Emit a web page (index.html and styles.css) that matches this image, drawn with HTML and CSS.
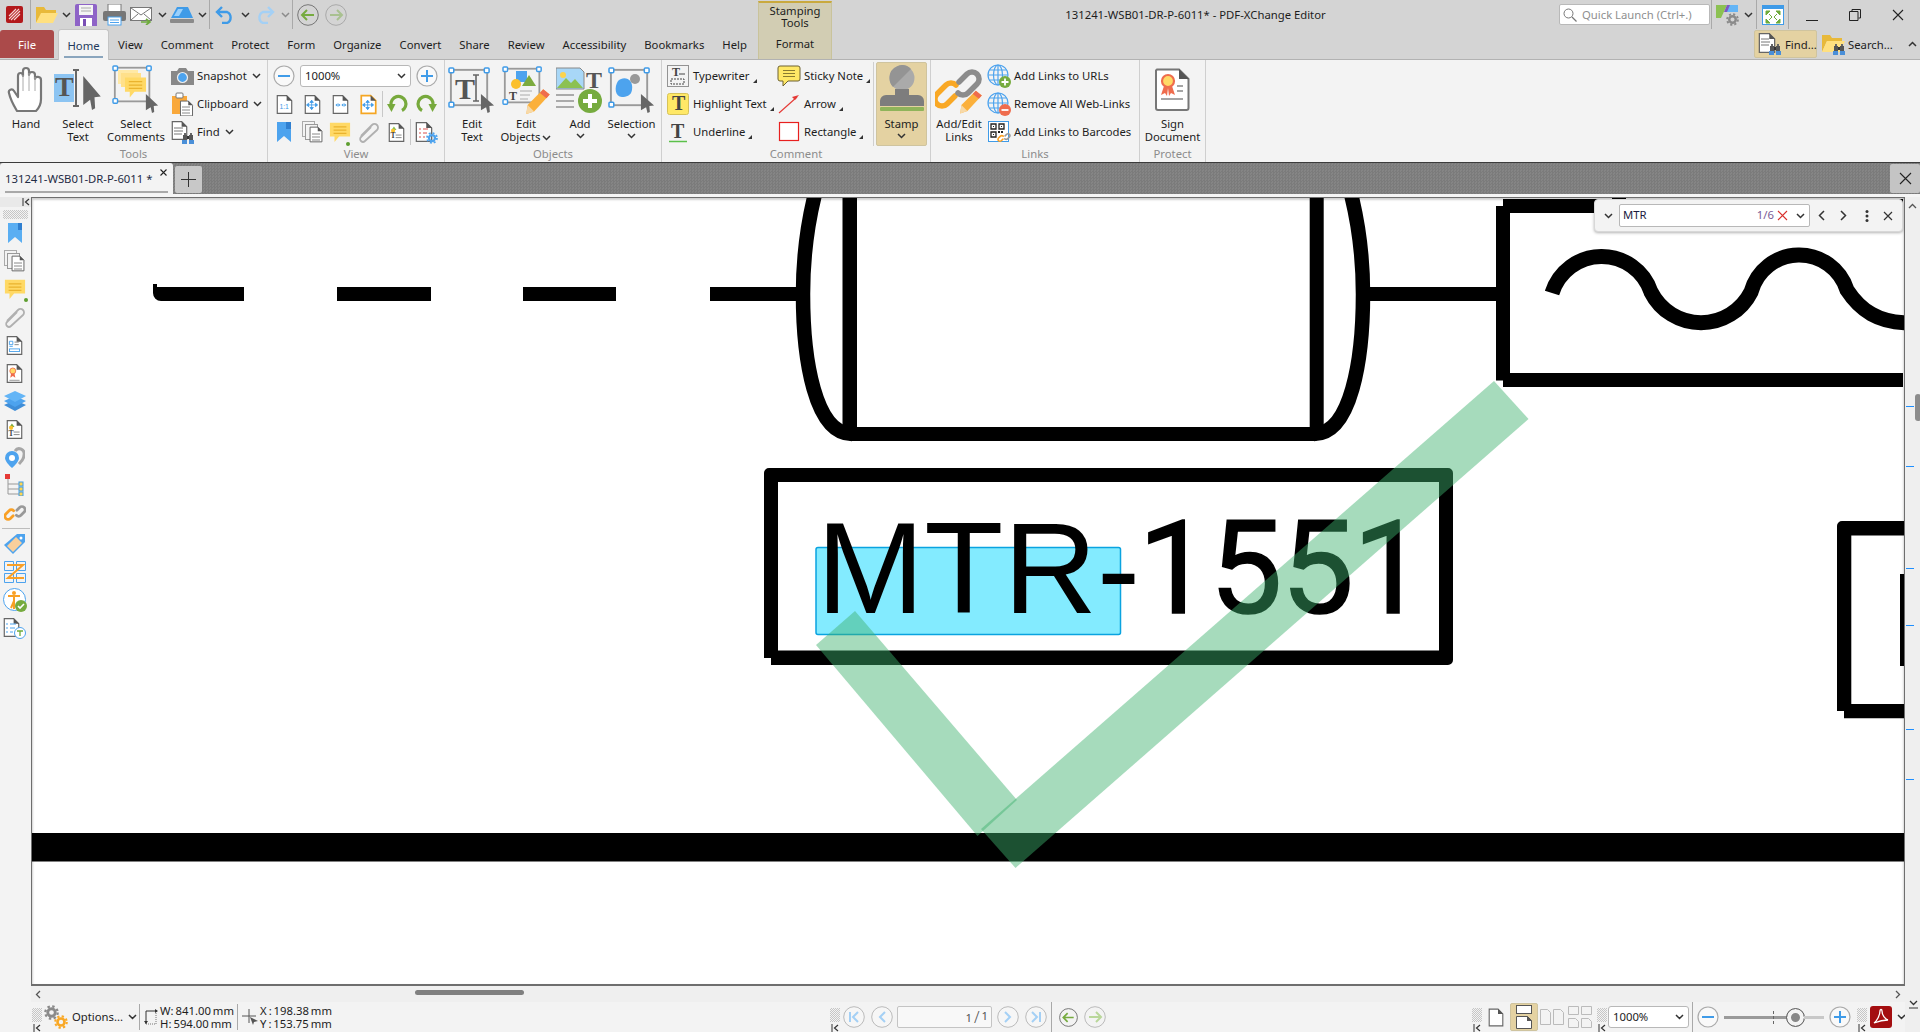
FILE: index.html
```html
<!DOCTYPE html>
<html lang="en">
<head>
<meta charset="utf-8">
<title>131241-WSB01-DR-P-6011* - PDF-XChange Editor</title>
<link rel="stylesheet" href="styles.css">
</head>
<body>
<svg class="defs" aria-hidden="true">
  <symbol id="chev" viewBox="0 0 9 6"><path d="M1 1l3.500 3.500L8 1" fill="none" stroke="#333" stroke-width="1.500"/></symbol>
  <symbol id="gear" viewBox="0 0 16 16"><circle cx="8" cy="8" r="4" fill="none" stroke="currentColor" stroke-width="3"/><circle cx="8" cy="8" r="6.600" fill="none" stroke="currentColor" stroke-width="2.400" stroke-dasharray="2.600 2.580"/></symbol>
  <symbol id="binoc" viewBox="0 0 12 12"><path d="M1 3h4v5H1zM7 3h4v5H7z" fill="#555"/><path d="M2 1h2v2H2zM8 1h2v2H8z" fill="#666"/><path d="M0 8h5v4H0zM7 8h5v4H7z" fill="#4a8fd8"/><path d="M5 4h2v3H5z" fill="#333"/></symbol>
  <symbol id="doc" viewBox="0 0 20 24"><path d="M1.500 1.500h11l6 6v15h-17z" fill="#fff" stroke="#666" stroke-width="1.400"/><path d="M12.500 1l6.500 6.500h-6.500z" fill="#555"/></symbol>
  <symbol id="bubble" viewBox="0 0 24 24"><path d="M1 2h22v15H11l-5 6v-6H1z" fill="#ffd966"/><path d="M5 6.500h14M5 10h14M5 13.500h14" stroke="#eab32e" stroke-width="1.300"/></symbol>
  <symbol id="pencil" viewBox="0 0 20 20"><path d="M14 1l5 4L7 18l-6 2 1-7z" fill="#fbb03b"/><path d="M14 1l5 4-2.500 2.800-5-4z" fill="#ef6c4d"/><path d="M2 13l5 5-6 2z" fill="#f7d9a8"/></symbol>
  <symbol id="globe" viewBox="0 0 24 24"><g fill="none" stroke="#4da3ee" stroke-width="1.200"><circle cx="11" cy="11" r="10"/><ellipse cx="11" cy="11" rx="4.500" ry="10"/><path d="M11 1v20M1 11h20M2.500 6h17M2.500 16h17"/></g></symbol>
  <symbol id="chain" viewBox="0 0 24 24"><path d="M10 15l-3 3a3.500 3.500 0 0 1-5-5l3.500-3.500a3.500 3.500 0 0 1 5 0" fill="none" stroke="#f9a025" stroke-width="3" stroke-linecap="round"/><path d="M14 9l3-3a3.500 3.500 0 0 1 5 5l-3.500 3.500a3.500 3.500 0 0 1-5 0" fill="none" stroke="#999" stroke-width="3" stroke-linecap="round"/></symbol>
  <symbol id="handles" viewBox="0 0 46 44"><rect x="3" y="3" width="38" height="37" fill="none" stroke="#9a9a9a" stroke-width="2"/><g fill="#fff" stroke="#3f9be8" stroke-width="1.600"><rect x="1" y="1" width="5" height="5" rx="1"/><rect x="38" y="1" width="5" height="5" rx="1"/><rect x="1" y="37" width="5" height="5" rx="1"/></g></symbol>
  <symbol id="cursor" viewBox="0 0 16 20" preserveAspectRatio="none"><path d="M1 0l14 12-5 .5.500 6.500L8 20l-1.500-6L1 17z" fill="#666"/></symbol>
  <symbol id="circminus" viewBox="0 0 22 22"><circle cx="11" cy="11" r="10" fill="#f9f9f9" stroke="#aaa" stroke-width="1.200"/><path d="M5 11h12" stroke="#3f9be8" stroke-width="2"/></symbol>
  <symbol id="circplus" viewBox="0 0 22 22"><circle cx="11" cy="11" r="10" fill="#f9f9f9" stroke="#aaa" stroke-width="1.200"/><path d="M5 11h12M11 5v12" stroke="#3f9be8" stroke-width="2"/></symbol>
  <symbol id="collapse" viewBox="0 0 8 8"><path d="M1 0v8" stroke="#333"/><path d="M7 1L3.500 4 7 7" fill="none" stroke="#333" stroke-width="1.200"/></symbol>
</svg>

<div class="app">
  <header class="head">
    <div class="qat">
      <div class="q q28"><svg width="17" height="17" viewBox="0 0 17 17"><rect width="17" height="17" rx="2" fill="#b3191c"/><path d="M3 13L13 3M5 14L14 5M8 14l6-6M3 10l7-7" stroke="#f4d5d5" stroke-width="1.100"/></svg></div>
      <i class="vsep m-l2"></i>
      <div class="q q31"><svg width="24" height="19" viewBox="0 0 24 19"><path d="M1 18V2h8l2 3h10v3H7L1 18z" fill="#e8b93a"/><path d="M1 18l5-10h17l-5 10z" fill="#ffe080"/></svg></div>
      <div class="q q8"><svg class="chev"><use href="#chev"/></svg></div>
      <div class="q q32"><svg width="22" height="22" viewBox="0 0 22 22"><path d="M0 2a2 2 0 0 1 2-2h18a2 2 0 0 1 2 2v20H0z" fill="#8e63c7"/><rect x="4" y="1" width="14" height="10" fill="#f4f4f4"/><path d="M6 4h10M6 7h10" stroke="#aaa"/><rect x="5" y="14" width="12" height="8" fill="#fff"/><rect x="8" y="15" width="3" height="7" fill="#7a4fb5"/></svg></div>
      <div class="q q24"><svg width="23" height="22" viewBox="0 0 23 22"><rect x="5" y="0" width="13" height="8" fill="#fff" stroke="#777"/><rect x="0" y="7" width="23" height="10" rx="2" fill="#777"/><rect x="5" y="13" width="13" height="8" fill="#fff" stroke="#4da3ee"/><path d="M7 16h9M7 18.500h9" stroke="#4da3ee"/></svg></div>
      <div class="q q31"><svg width="24" height="20" viewBox="0 0 24 20"><rect x=".5" y="2.500" width="21" height="13" fill="#fff" stroke="#777"/><path d="M1 3l10 7 10-7M1 15l7-6M21 15l-7-6" fill="none" stroke="#777"/><path d="M11 17h8m-3-3l4 3-4 3" fill="none" stroke="#6eab3c" stroke-width="1.600"/></svg></div>
      <div class="q q10"><svg class="chev"><use href="#chev"/></svg></div>
      <div class="q q30"><svg width="24" height="16" viewBox="0 0 24 16"><path d="M7 0h11l5 11H1z" fill="#3f9be8"/><path d="M8 2h5l-4 7H4z" fill="#9ad0fb"/><rect x="0" y="12" width="24" height="4" rx="1" fill="#8a8a8a"/></svg></div>
      <div class="q q10"><svg class="chev"><use href="#chev"/></svg></div>
      <i class="vsep m-x2"></i>
      <div class="q q30"><svg width="20" height="18" viewBox="0 0 20 18"><path d="M7 1L2 6l5 5" fill="none" stroke="#3f9be8" stroke-width="2.400"/><path d="M3 6h9a6 6 0 0 1 0 11H7" fill="none" stroke="#3f9be8" stroke-width="2.400"/></svg></div>
      <div class="q q10"><svg class="chev"><use href="#chev"/></svg></div>
      <div class="q q30"><svg width="20" height="18" viewBox="0 0 20 18"><path d="M13 1l5 5-5 5" fill="none" stroke="#a4d0f5" stroke-width="2.400"/><path d="M17 6H8a6 6 0 0 0 0 11h5" fill="none" stroke="#a4d0f5" stroke-width="2.400"/></svg></div>
      <div class="q q10"><svg class="chev dim"><use href="#chev"/></svg></div>
      <i class="vsep m-x2"></i>
      <div class="q q29"><svg width="22" height="22" viewBox="0 0 22 22"><circle cx="11" cy="11" r="10.300" fill="none" stroke="#777"/><path d="M5 11h12M10 6l-5 5 5 5" fill="none" stroke="#76ab3f" stroke-width="2"/></svg></div>
      <div class="q q28"><svg class="dim" width="22" height="22" viewBox="0 0 22 22"><circle cx="11" cy="11" r="10.300" fill="none" stroke="#777"/><path d="M5 11h12M12 6l5 5-5 5" fill="none" stroke="#76ab3f" stroke-width="2"/></svg></div>
    </div>

    <nav class="tabs">
      <span class="tab-file">File</span>
      <span class="tab-home">Home</span>
      <span class="tab">View</span><span class="tab">Comment</span><span class="tab">Protect</span><span class="tab">Form</span><span class="tab">Organize</span><span class="tab">Convert</span><span class="tab">Share</span><span class="tab">Review</span><span class="tab">Accessibility</span><span class="tab">Bookmarks</span><span class="tab">Help</span>
    </nav>

    <div class="context"><span class="ctx-title">Stamping<br>Tools</span><span class="ctx-tab">Format</span></div>

    <div class="title">131241-WSB01-DR-P-6011* - PDF-XChange Editor</div>

    <div class="winbar">
      <div class="quick"><svg width="14" height="14" viewBox="0 0 14 14"><circle cx="5.500" cy="5.500" r="4.500" fill="none" stroke="#777"/><path d="M9 9l4.500 4.500" stroke="#777" stroke-width="1.300"/></svg><span>Quick Launch (Ctrl+.)</span></div>
      <i class="vsep m-x1"></i>
      <svg class="m-l4" width="24" height="24" viewBox="0 0 24 24"><path d="M0 2h11L5 15H0z" fill="#8cc152"/><path d="M12 2h10v7h-13z" fill="#64b5f6"/><path d="M11 2h3l-3 7H8z" fill="#7e57c2"/><path d="M0 15h6l-1 0z" fill="#f2994a"/><use href="#gear" x="10" y="10" width="13" height="13" class="c-gray"/></svg>
      <svg class="chev m-l4"><use href="#chev"/></svg>
      <i class="vsep m-l3"></i>
      <svg class="m-l5" width="22" height="20" viewBox="0 0 22 20"><rect x=".5" y=".5" width="21" height="19" fill="#fff" stroke="#3f9be8"/><rect width="22" height="4" fill="#3f9be8"/><path d="M4 6l4 0-4 4zM18 6h-4l4 4zM4 18h4l-4-4zM18 18h-4l4-4zM7 9l3 3M15 9l-3 3M7 15l3-3M15 15l-3-3" fill="#6eab3c" stroke="#6eab3c"/></svg>
      <i class="vsep m-l4"></i>
      <div class="wbtn wb-min"><svg width="12" height="12" viewBox="0 0 12 12"><path d="M0 11.500h12" stroke="#222"/></svg></div>
      <div class="wbtn"><svg width="12" height="12" viewBox="0 0 12 12"><path d="M3 2.500V.5h8.500V9H9.500M.5 2.500H9V11.500H.5z" fill="none" stroke="#222"/></svg></div>
      <div class="wbtn"><svg width="12" height="12" viewBox="0 0 12 12"><path d="M1 1l10 10M11 1L1 11" stroke="#222" stroke-width="1.100"/></svg></div>
    </div>

    <div class="quickbtns">
      <div class="qbtn active"><svg width="24" height="24" viewBox="0 0 24 24"><use href="#doc" width="18" height="22"/><path d="M3 7h8M3 10h9M3 13h8" stroke="#777"/><use href="#binoc" x="11" y="11" width="12" height="12"/></svg><span>Find...</span></div>
      <div class="qbtn"><svg width="24" height="24" viewBox="0 0 24 24"><path d="M1 20V3h8l2 3h10v3H6z" fill="#e8b93a"/><path d="M1 20l5-11h18l-5 11z" fill="#ffe080"/><use href="#binoc" x="12" y="11" width="12" height="12"/></svg><span>Search...</span></div>
      <svg class="caret" width="9" height="6" viewBox="0 0 9 6"><path d="M1 5l3.500-3.500L8 5" fill="none" stroke="#333" stroke-width="1.500"/></svg>
    </div>
  </header>

  <section class="ribbon">
    <div class="group g-tools">
      <div class="gbody">
        <div class="big w52"><div class="bic"><svg width="38" height="50" viewBox="0 0 38 50"><path d="M10 46C7 41 3 33 2 28c-1-3 3-5 5-2l4 6V11c0-4 5-4 5 0V6c0-4 6-4 6 0v4c0-4 6-4 6 0v4c0-3 6-3 6 1v19c0 5-2 9-5 12z" fill="#fff" stroke="#777" stroke-width="2.200" stroke-linejoin="round"/><path d="M16 10v16M22 8v18M28 12v14" stroke="#aaa"/></svg></div><span class="lbl">Hand</span></div>
        <div class="big w52"><div class="bic"><svg width="48" height="42" viewBox="0 0 48 42"><rect y="5" width="20" height="28" fill="#8cc4f2"/><text x="1" y="27" class="ictxt">T</text><path d="M19 1h6M22 1v36M19 37h6" stroke="#666" stroke-width="2" fill="none"/><use href="#cursor" x="28" y="7" width="20" height="34"/></svg></div><span class="lbl">Select<br>Text</span></div>
        <div class="big w64"><div class="bic"><svg width="48" height="50" viewBox="0 0 48 50"><use href="#handles" width="42" height="40"/><rect x="6" y="5" width="20" height="14" fill="#ffe9a6"/><rect x="9" y="8" width="20" height="14" fill="#ffe08a"/><use href="#bubble" x="12" y="10" width="23" height="24"/><use href="#cursor" x="33" y="29" width="14" height="19"/></svg></div><span class="lbl">Select<br>Comments</span></div>
        <div class="smallcol">
          <div class="srow"><svg class="sic" width="23" height="18" viewBox="0 0 23 18"><path d="M0 4h6l2-3h7l2 3h6v14H0z" fill="#888"/><circle cx="11.500" cy="10.500" r="5" fill="#4da3ee" stroke="#eee" stroke-width="1.200"/></svg><span>Snapshot</span><svg class="chev m-l5"><use href="#chev"/></svg></div>
          <div class="srow"><svg class="sic" width="23" height="24" viewBox="0 0 23 24"><path d="M1 4h15v18H1z" fill="#f9a83a"/><rect x="5" y="1" width="7" height="5" rx="1" fill="#fff" stroke="#777"/><use href="#doc" x="8" y="8" width="15" height="17"/><path d="M11 15h8M11 18h8M11 21h8" stroke="#888"/></svg><span>Clipboard</span><svg class="chev m-l5"><use href="#chev"/></svg></div>
          <div class="srow"><svg class="sic" width="23" height="24" viewBox="0 0 23 24"><use href="#doc" width="17" height="21"/><path d="M3 8h9M3 11h9M3 14h8" stroke="#777"/><use href="#binoc" x="11" y="12" width="12" height="12"/></svg><span>Find</span><svg class="chev m-l5"><use href="#chev"/></svg></div>
        </div>
      </div>
      <div class="glabel">Tools</div>
    </div>

    <div class="group g-view">
      <div class="viewgrid">
        <div class="vrow vrow1">
          <svg width="22" height="22"><use href="#circminus"/></svg>
          <div class="combo c-zoom"><span>1000%</span><svg class="chev"><use href="#chev"/></svg></div>
          <svg width="22" height="22"><use href="#circplus"/></svg>
        </div>
        <div class="vrow">
          <div class="cell"><svg width="17" height="21" viewBox="0 0 20 24"><use href="#doc"/><text x="4" y="17" class="mini">1:1</text></svg></div>
          <div class="cell"><svg width="17" height="21" viewBox="0 0 20 24"><use href="#doc"/><path d="M9 7v11M4 12.500h11M9 7L7 9.500h4zM9 18l-2-2.500h4zM3 12.500l2.500-2v4zM16 12.500l-2.500-2v4z" fill="#3f9be8" stroke="#3f9be8"/></svg></div>
          <div class="cell"><svg width="17" height="21" viewBox="0 0 20 24"><use href="#doc"/><path d="M4 12.500l2.500-2v4zM10 12.500L7.500 10.500v4zM11 12.500l2.500-2v4zM17 12.500l-2.500-2v4z" fill="#3f9be8"/></svg></div>
          <div class="cell"><svg width="17" height="21" viewBox="0 0 20 24"><path d="M1.500 1.500h11l6 6v15h-17z" fill="#fff" stroke="#f5a623" stroke-width="2"/><path d="M12.500 1l6.500 6.500h-6.500z" fill="#555"/><path d="M9 7v11M4 12.500h11M9 7L7 9.500h4zM9 18l-2-2.500h4zM3 12.500l2.500-2v4zM16 12.500l-2.500-2v4z" fill="#3f9be8" stroke="#3f9be8"/></svg></div>
          <i class="vsep rsep"></i>
          <div class="cell"><svg width="22" height="20" viewBox="0 0 22 20"><path d="M4 11A7.500 7.500 0 1 1 15 16.500" fill="none" stroke="#77a93c" stroke-width="3.200"/><path d="M0 10h8.500l-4 8z" fill="#77a93c"/></svg></div>
          <div class="cell"><svg width="22" height="20" viewBox="0 0 22 20"><path d="M18 11A7.500 7.500 0 1 0 7 16.500" fill="none" stroke="#77a93c" stroke-width="3.200"/><path d="M22 10h-8.500l4 8z" fill="#77a93c"/></svg></div>
        </div>
        <div class="vrow">
          <div class="cell"><svg width="14" height="20" viewBox="0 0 14 20"><path d="M0 0h14v20l-7-6-7 6z" fill="#4da3ee"/><rect x="9" width="5" height="7" fill="#2f7fd0"/></svg></div>
          <div class="cell"><svg width="21" height="22" viewBox="0 0 21 22"><rect x=".5" y=".5" width="12" height="15" fill="#f3f3f3" stroke="#aaa"/><rect x="3.500" y="3.500" width="12" height="15" fill="#f3f3f3" stroke="#999"/><use href="#doc" x="7" y="5" width="14" height="17"/><path d="M10 13h8M10 16h8M10 19h8" stroke="#888"/></svg></div>
          <div class="cell cell-dot"><svg width="22" height="22"><use href="#bubble"/></svg><i class="gdot"></i></div>
          <div class="cell"><svg width="23" height="22" viewBox="0 0 23 22"><path d="M4 15L15 4a3.500 3.500 0 0 1 5 5L8 20a2.800 2.800 0 0 1-4-4l10-10" fill="none" stroke="#b0b0b0" stroke-width="1.800"/></svg></div>
          <div class="cell"><svg width="17" height="21" viewBox="0 0 20 24"><use href="#doc"/><path d="M4 9l3-4 3 4z" fill="#8cc152"/><circle cx="6" cy="10" r="2.500" fill="#fbc02d"/><text x="3" y="19" class="mini2">T</text><path d="M9 15h7M9 18h7" stroke="#777"/></svg></div>
          <i class="vsep rsep2"></i>
          <div class="cell"><svg width="23" height="23" viewBox="0 0 23 23"><use href="#doc" width="18" height="22"/><path d="M4 8h2M8 8h5M4 12h2M8 12h4M4 16h2M8 16h2" stroke="#d9534f"/><use href="#gear" x="11" y="11" width="12" height="12" class="c-blue"/></svg></div>
        </div>
      </div>
      <div class="glabel">View</div>
    </div>

    <div class="group g-objects">
      <div class="gbody">
        <div class="big w54"><div class="bic"><svg width="48" height="46" viewBox="0 0 48 46"><use href="#handles" width="44" height="42"/><text x="7" y="32" class="ictxt lg">T</text><path d="M25 8h6M28 8v26M25 34h6" stroke="#666" stroke-width="1.600" fill="none"/><use href="#cursor" x="32" y="27" width="15" height="19"/></svg></div><span class="lbl">Edit<br>Text</span></div>
        <div class="big w54"><div class="bic"><svg width="48" height="48" viewBox="0 0 48 48"><use href="#handles" width="42" height="40"/><rect x="14" y="5" width="11" height="11" fill="#4da3ee"/><path d="M20 20l7-11 7 11z" fill="#7cab3e"/><circle cx="14" cy="18" r="5" fill="#fbc02d"/><text x="7" y="34" class="mini3">T</text><path d="M18 25h12M18 29h10M18 33h8" stroke="#aaa"/><use href="#pencil" x="23" y="22" width="26" height="26"/></svg></div><span class="lbl">Edit<br>Objects<svg class="chev inl"><use href="#chev"/></svg></span></div>
        <div class="big w54"><div class="bic"><svg width="48" height="48" viewBox="0 0 48 48"><path d="M0 2h24l4 4v17H0z" fill="#a8d7f7" stroke="#888"/><circle cx="7" cy="9" r="3" fill="#fcd34d"/><path d="M1 22l9-10 5 5 4-4 8 9z" fill="#8cc152"/><text x="30" y="22" class="ictxt add">T</text><path d="M0 29h18M0 35h18M0 41h18" stroke="#aaa" stroke-width="2"/><circle cx="34" cy="35" r="12" fill="#76ab3f"/><path d="M27 35h14M34 28v14" stroke="#fff" stroke-width="4"/></svg></div><span class="lbl">Add<br><svg class="chev"><use href="#chev"/></svg></span></div>
        <div class="big w49"><div class="bic"><svg width="48" height="46" viewBox="0 0 48 46"><use href="#handles" width="44" height="42"/><path d="M10 14c6-6 16-2 14 9-1 6-6 7-10 7-7 0-8-10-4-16z" fill="#4da3ee"/><circle cx="27" cy="12" r="5" fill="#999"/><use href="#cursor" x="32" y="27" width="15" height="19"/></svg></div><span class="lbl">Selection<br><svg class="chev"><use href="#chev"/></svg></span></div>
      </div>
      <div class="glabel">Objects</div>
    </div>

    <div class="group g-comment">
      <div class="gbody">
        <div class="smallcol col-a">
          <div class="srow"><svg class="sic22" width="22" height="22" viewBox="0 0 22 22"><rect x=".5" y=".5" width="21" height="21" fill="none" stroke="#333" stroke-dasharray="1 1"/><text x="5" y="11" class="mini3">T</text><path d="M4 14h13v5H4z" fill="none" stroke="#444" stroke-dasharray="2 1"/><path d="M12 9h6" stroke="#444"/></svg><span>Typewriter</span><i class="corner"></i></div>
          <div class="srow"><svg class="sic22" width="22" height="22" viewBox="0 0 22 22"><rect x=".5" y=".5" width="21" height="21" rx="2" fill="#ffe866" stroke="#d6c25a"/><text x="5" y="17" class="ictxt sm">T</text></svg><span>Highlight Text</span><i class="corner"></i></div>
          <div class="srow"><svg class="sic22" width="22" height="22" viewBox="0 0 22 22"><text x="4" y="17" class="ictxt sm">T</text><path d="M2 20.500h18" stroke="#5bc04a" stroke-width="1.500"/></svg><span>Underline</span><i class="corner"></i></div>
        </div>
        <div class="smallcol col-b">
          <div class="srow"><svg class="sic" width="24" height="22" viewBox="0 0 24 22"><path d="M3 1h18a2 2 0 0 1 2 2v11a2 2 0 0 1-2 2H11l-5 5v-5H3a2 2 0 0 1-2-2V3a2 2 0 0 1 2-2z" fill="#ffe866" stroke="#6c6130"/><path d="M6 5.500h12M6 8.500h12M6 11.500h12" stroke="#8a7c30"/></svg><span>Sticky Note</span><i class="corner"></i></div>
          <div class="srow"><svg class="sic" width="24" height="22" viewBox="0 0 24 22"><path d="M2 20L20 4" stroke="#e53935" stroke-width="1.200"/><path d="M22 2l-7 2 3 3z" fill="#e53935"/></svg><span>Arrow</span><i class="corner"></i></div>
          <div class="srow"><svg class="sic" width="24" height="22" viewBox="0 0 24 22"><rect x="2.500" y="1.500" width="19" height="18" fill="#fff" stroke="#e8201f" stroke-width="1.200"/></svg><span>Rectangle</span><i class="corner"></i></div>
        </div>
        <i class="vsep stampsep"></i>
        <div class="stamp">
          <svg width="46" height="48" viewBox="0 0 46 48"><circle cx="23" cy="13" r="12.500" fill="#aaa"/><path d="M10.500 13A12.500 12.500 0 0 1 32 4L14 22a12.500 12.500 0 0 1-3.500-9z" fill="#949494"/><path d="M16 24h14v6h9a6 6 0 0 1 6 6v5H1v-5a6 6 0 0 1 6-6h9z" fill="#7d7d7d"/><rect x="1" y="42" width="44" height="4" rx="1" fill="#8fb45a"/></svg>
          <span class="lbl">Stamp<br><svg class="chev"><use href="#chev"/></svg></span>
        </div>
      </div>
      <div class="glabel">Comment</div>
    </div>

    <div class="group g-links">
      <div class="gbody">
        <div class="big w56"><div class="bic"><svg width="48" height="50" viewBox="0 0 48 50"><path d="M20 31l-8 8a7 7 0 0 1-10-10l9-9a7 7 0 0 1 10 0" fill="none" stroke="#f9a825" stroke-width="5.500" stroke-linecap="round"/><path d="M24 17l8-8a7 7 0 0 1 10 10l-9 9a7 7 0 0 1-10 0" fill="none" stroke="#8c8c8c" stroke-width="5.500" stroke-linecap="round"/><use href="#pencil" x="24" y="24" width="24" height="25"/></svg></div><span class="lbl">Add/Edit<br>Links</span></div>
        <div class="smallcol col-l">
          <div class="srow"><svg class="sic" width="24" height="24" viewBox="0 0 24 24"><use href="#globe"/><circle cx="18" cy="18" r="6" fill="#76ab3f"/><path d="M14.500 18h7M18 14.500v7" stroke="#fff" stroke-width="1.800"/></svg><span>Add Links to URLs</span></div>
          <div class="srow"><svg class="sic" width="24" height="24" viewBox="0 0 24 24"><use href="#globe"/><circle cx="18" cy="18" r="6" fill="#ef6c4d"/><path d="M14.500 18h7" stroke="#fff" stroke-width="1.800"/></svg><span>Remove All Web-Links</span></div>
          <div class="srow"><svg class="sic" width="24" height="24" viewBox="0 0 24 24"><rect x="1.500" y="1.500" width="20" height="20" fill="#fff" stroke="#3f9be8"/><path d="M4 4h5v5H4zM12 4h5v5h-5zM4 12h5v5H4z" fill="none" stroke="#222" stroke-width="1.300"/><path d="M6 6h1v1H6zM14 6h1v1h-1zM6 14h1v1H6zM11 11h2v2h-2zM14 11h2v2h-2z" fill="#222"/><use href="#chain" x="10" y="11" width="14" height="13"/></svg><span>Add Links to Barcodes</span></div>
        </div>
      </div>
      <div class="glabel">Links</div>
    </div>

    <div class="group g-protect">
      <div class="gbody">
        <div class="big w65"><div class="bic"><svg width="35" height="44" viewBox="0 0 35 44"><path d="M2 1.500h22l9.500 9.500v29a2 2 0 0 1-2 2H3a2 2 0 0 1-2-2V2.500z" fill="#fff" stroke="#777" stroke-width="2"/><path d="M24 1l10 10H24z" fill="#555"/><circle cx="13" cy="13" r="6" fill="#ffd966" stroke="#ef6c4d" stroke-width="2.200"/><path d="M9 18l-3 9 4-2 2 3 1-8 1 8 2-3 4 2-3-9z" fill="#ef6c4d"/><path d="M22 18h6M22 23h6M6 31h22" stroke="#888" stroke-width="1.500"/></svg></div><span class="lbl">Sign<br>Document</span></div>
      </div>
      <div class="glabel">Protect</div>
    </div>
    <div class="ribbon-rest"></div>
  </section>

  <div class="docstrip">
    <div class="doctab"><span>131241-WSB01-DR-P-6011 *</span><svg class="doctab-x" width="7" height="7" viewBox="0 0 7 7"><path d="M.5.500l6 6M6.500.500l-6 6" stroke="#222" stroke-width="1.100"/></svg></div>
    <div class="addtab"><svg width="15" height="15" viewBox="0 0 15 15"><path d="M7.500 0v15M0 7.500h15" stroke="#333"/></svg></div>
    <div class="strip-rest"></div>
    <div class="closeall"><svg width="13" height="13" viewBox="0 0 13 13"><path d="M1 1l11 11M12 1L1 12" stroke="#222" stroke-width="1.100"/></svg></div>
  </div>
  <div class="stripgap"></div>

  <div class="work">
    <aside class="side">
      <div class="side-top"><svg class="col8" width="8" height="8"><use href="#collapse"/></svg></div>
      <div class="grip-h"></div>
      <div class="sideicons">
        <div class="si"><svg width="14" height="20" viewBox="0 0 14 20"><path d="M0 0h14v20l-7-6-7 6z" fill="#5aaef2"/><rect x="10" width="4" height="7" fill="#2f7fd0"/></svg></div>
        <div class="si"><svg width="21" height="22" viewBox="0 0 21 22"><rect x=".5" y=".5" width="12" height="15" fill="#f3f3f3" stroke="#aaa"/><rect x="3.500" y="3.500" width="12" height="15" fill="#f3f3f3" stroke="#999"/><use href="#doc" x="7" y="5" width="14" height="17"/><path d="M10 13h8M10 16h8M10 19h8" stroke="#888"/></svg></div>
        <div class="si cell-dot"><svg width="22" height="22"><use href="#bubble"/></svg><i class="gdot gdot-s"></i></div>
        <div class="si"><svg width="23" height="22" viewBox="0 0 23 22"><path d="M4 15L15 4a3.500 3.500 0 0 1 5 5L8 20a2.800 2.800 0 0 1-4-4l10-10" fill="none" stroke="#b0b0b0" stroke-width="1.800"/></svg></div>
        <div class="si"><svg width="17" height="21" viewBox="0 0 20 24"><use href="#doc"/><path d="M4 7h4v4H4zM4 13h4" fill="none" stroke="#3f9be8"/><path d="M10 8h5M10 11h5" stroke="#777"/><rect x="4" y="16" width="12" height="3" fill="none" stroke="#3f9be8"/></svg></div>
        <div class="si"><svg width="17" height="21" viewBox="0 0 20 24"><use href="#doc"/><circle cx="8" cy="9" r="3.500" fill="#ffd966" stroke="#ef6c4d"/><path d="M6 12l-1 5 3-2 3 2-1-5z" fill="#ef6c4d"/><path d="M4 20h12" stroke="#888"/></svg></div>
        <div class="si"><svg width="22" height="20" viewBox="0 0 22 20"><path d="M11 9l11 5-11 6L0 14z" fill="#3f8ed8"/><path d="M11 5l11 5-11 6L0 10z" fill="#4da3ee"/><path d="M11 0l11 5-11 6L0 5z" fill="#64b5f6"/></svg></div>
        <div class="si"><svg width="17" height="21" viewBox="0 0 20 24"><use href="#doc"/><path d="M4 9l3-4 3 4z" fill="#7cab3e"/><circle cx="6" cy="10" r="2.500" fill="#fbc02d"/><text x="3" y="20" class="mini2">T</text><path d="M9 15h7M9 18h7" stroke="#777"/></svg></div>
        <div class="si"><svg width="20" height="21" viewBox="0 0 20 21"><path d="M10 4a5 5 0 0 1 9 4c0 3-3 7-5 9" fill="none" stroke="#a6a6a6" stroke-width="3"/><path d="M7 4a7 7 0 0 1 7 7c0 4-7 10-7 10S0 15 0 11a7 7 0 0 1 7-7z" fill="#4da3ee"/><circle cx="7" cy="11" r="3" fill="#fff"/></svg></div>
        <div class="si"><svg width="19" height="22" viewBox="0 0 19 22"><rect width="5" height="5" fill="#e53935"/><path d="M3 5v15h12M3 10h12M3 15h12" fill="none" stroke="#999"/><g fill="#ffd54f" stroke="#3f9be8"><rect x="14" y="8" width="4" height="4"/><rect x="14" y="13" width="4" height="4"/><rect x="14" y="18" width="4" height="4"/></g></svg></div>
        <div class="si"><svg width="22" height="22"><use href="#chain"/></svg></div>
      </div>
      <i class="side-sep"></i>
      <div class="sideicons">
        <div class="si"><svg width="21" height="20" viewBox="0 0 21 20"><path d="M13 0h8v8L9 20 0 11z" fill="#4da3ee"/><path d="M12 3l6 6-9 9-6-6z" fill="#f9cf9c"/><circle cx="17" cy="4" r="1.500" fill="#fff"/></svg></div>
        <div class="si"><svg width="22" height="22" viewBox="0 0 22 22"><path d="M.5.500h9v9h-9zM12.500.500h9v9h-9zM.5 12.500h9v9h-9zM12.500 12.500h9v9h-9z" fill="none" stroke="#4da3ee"/><path d="M3 4h16L4 17h16" fill="none" stroke="#f9a025" stroke-width="2"/></svg></div>
        <div class="si"><svg width="24" height="24" viewBox="0 0 24 24"><circle cx="11.500" cy="11.500" r="11" fill="#fff" stroke="#4da3ee"/><circle cx="11" cy="5" r="2" fill="#f9a025"/><path d="M5 8h12M11 8v13M11 13l-3 7" fill="none" stroke="#f9a025" stroke-width="2"/><circle cx="18" cy="18" r="6" fill="#76ab3f"/><path d="M15 18l2 2 4-4" fill="none" stroke="#fff" stroke-width="1.600"/></svg></div>
        <div class="si"><svg width="23" height="22" viewBox="0 0 23 22"><use href="#doc" width="17" height="21"/><path d="M3 7h2M7 7h6M3 11h2M7 11h5M3 15h2M7 15h3" stroke="#4da3ee"/><circle cx="17" cy="16" r="5.500" fill="#fff" stroke="#4da3ee"/><path d="M14 14h6M17 14v5" stroke="#6eab3c" stroke-width="1.300"/></svg></div>
      </div>
    </aside>

    <div class="center">
      <main class="viewport">
        <svg class="drawing" viewBox="32 198 1872 786" preserveAspectRatio="none">
          <rect x="816" y="547.500" width="304.500" height="87" rx="2" class="hl"/>
          <g class="ink">
            <path d="M153 284h4v3h87v14h-83a8 8 0 0 1-8-8zM337 287h94v14h-94zM523 287h93v14h-93zM710 287h90v14h-90z"/>
            <path d="M842.500 198h14.500v229h452.700V198h14v229h-7.200v14H849.700v-14h-7.200z"/>
            <path d="M1370 287h126v14h-126z"/>
            <path d="M1503 199h400v14h-393v160h393v14h-400v-6.500h-7V206h7zM1612 197h14v3h-14z"/>
            <path d="M764 473a5 5 0 0 1 5-5h679a5 5 0 0 1 5 5v187a5 5 0 0 1-5 5H771v-7h-7zM778 482v168.500h661V482z" fill-rule="evenodd"/>
            <path d="M1837 526a5 5 0 0 1 5-5h63v14.500h-53.700V704H1905v14.300h-61v-7.300h-7z"/>
            <path d="M1900 574h5v92h-5z"/>
            <path d="M32 833h1872v28.500H32z"/>
          </g>
          <g class="stroke14">
            <path d="M816 190Q803 240 803 294C803 360 815 434 852 434"/>
            <path d="M1350 190Q1363 240 1363 294C1363 360 1351 434 1314 434"/>
            <path class="wave" d="M1552 293A52 52 0 0 1 1651 292A56 56 0 0 0 1751 292A50 50 0 0 1 1847 290C1860 310 1878 323 1910 323"/>
          </g>
          <text x="816.500" y="612.500" class="tag">MTR-<tspan class="tag-digits" x="1138">1551</tspan></text>
          <polygon class="check" points="855,611 816,645 977.500,836 1017,800"/>
          <polygon class="check" points="1494,381 1528.500,419 1015.500,868 981,829"/>
        </svg>
        <div class="findbar">
          <svg class="chev"><use href="#chev"/></svg>
          <div class="findbox"><span class="ftext">MTR</span><span class="fcount">1/6</span><svg width="11" height="11" viewBox="0 0 11 11"><path d="M1 1l9 9M10 1l-9 9" stroke="#d9302c" stroke-width="1.100"/></svg><svg class="chev"><use href="#chev"/></svg></div>
          <svg class="fic-prev" width="7" height="11" viewBox="0 0 7 11"><path d="M6 1L1.500 5.500 6 10" fill="none" stroke="#333" stroke-width="1.500"/></svg>
          <svg class="fic-next" width="7" height="11" viewBox="0 0 7 11"><path d="M1 1l4.500 4.500L1 10" fill="none" stroke="#333" stroke-width="1.500"/></svg>
          <svg class="fic-more" width="4" height="12" viewBox="0 0 4 12"><circle cx="2" cy="1.500" r="1.500" fill="#333"/><circle cx="2" cy="6" r="1.500" fill="#333"/><circle cx="2" cy="10.500" r="1.500" fill="#333"/></svg>
          <svg class="fic-close" width="10" height="10" viewBox="0 0 10 10"><path d="M1 1l8 8M9 1L1 9" stroke="#333" stroke-width="1.200"/></svg>
        </div>
      </main>

      <div class="hscroll"><svg class="arrow" width="6" height="9" viewBox="0 0 6 9"><path d="M5 1L1.500 4.500 5 8" fill="none" stroke="#555" stroke-width="1.300"/></svg><i class="hthumb"></i><svg class="arrow" width="6" height="9" viewBox="0 0 6 9"><path d="M1 1l3.500 3.500L1 8" fill="none" stroke="#555" stroke-width="1.300"/></svg></div>

      <footer class="status">
        <div class="st st-left">
          <div class="griploc"><i class="grip"></i><svg width="8" height="8"><use href="#collapse"/></svg></div>
          <svg class="st-gear" width="24" height="24" viewBox="0 0 24 24"><use href="#gear" width="15" height="15" class="c-gray"/><use href="#gear" x="10" y="10" width="14" height="14" class="c-orange"/></svg>
          <span class="st-opt">Options...</span>
          <svg class="chev st-chev"><use href="#chev"/></svg>
          <i class="vsep st-sep"></i>
          <svg class="st-ic" width="16" height="16" viewBox="0 0 16 16"><path d="M3 15V2h11" fill="none" stroke="#333"/><path d="M3 15h10V3" fill="none" stroke="#777" stroke-dasharray="1 1"/><path d="M12 0l3 2-3 2zM1 12l2 3 2-3z" fill="#333"/></svg>
          <div class="st-vals v-wh"><span>W: 841.00 mm</span><span>H: 594.00 mm</span></div>
          <i class="vsep st-sep2"></i>
          <svg class="st-ic2" width="17" height="17" viewBox="0 0 17 17"><path d="M7 0v14M0 7h14" stroke="#555"/><path d="M8 8l8 4-4 1-1 3z" fill="#555"/></svg>
          <div class="st-vals v-xy"><span>X : 198.38 mm</span><span>Y : 153.75 mm</span></div>
        </div>
        <div class="st st-mid">
          <div class="griploc"><i class="grip"></i><svg width="8" height="8"><use href="#collapse"/></svg></div>
          <svg class="nav nav0" width="22" height="22" viewBox="0 0 22 22"><circle cx="11" cy="11" r="10.300" fill="#f6f6f6" stroke="#bbb"/><path d="M7 6v10M15 6l-5 5 5 5" fill="none" stroke="#a4d0f5" stroke-width="2"/></svg>
          <svg class="nav" width="22" height="22" viewBox="0 0 22 22"><circle cx="11" cy="11" r="10.300" fill="#f6f6f6" stroke="#bbb"/><path d="M14 6l-5 5 5 5" fill="none" stroke="#a4d0f5" stroke-width="2"/></svg>
          <div class="pagebox"><span>1</span><span class="slash">/</span><span class="pg-total">1</span></div>
          <svg class="nav" width="22" height="22" viewBox="0 0 22 22"><circle cx="11" cy="11" r="10.300" fill="#f6f6f6" stroke="#bbb"/><path d="M8 6l5 5-5 5" fill="none" stroke="#a4d0f5" stroke-width="2"/></svg>
          <svg class="nav" width="22" height="22" viewBox="0 0 22 22"><circle cx="11" cy="11" r="10.300" fill="#f6f6f6" stroke="#bbb"/><path d="M15 6v10M7 6l5 5-5 5" fill="none" stroke="#a4d0f5" stroke-width="2"/></svg>
          <i class="vsep mid-sep"></i>
          <svg class="nav nav-b" width="19" height="19" viewBox="0 0 22 22"><circle cx="11" cy="11" r="10.300" fill="none" stroke="#666"/><path d="M5 11h12M10 6l-5 5 5 5" fill="none" stroke="#76ab3f" stroke-width="2"/></svg>
          <svg class="nav nav-f" width="22" height="22" viewBox="0 0 22 22"><circle cx="11" cy="11" r="10.300" fill="none" stroke="#bbb"/><path d="M5 11h12M12 6l5 5-5 5" fill="none" stroke="#b9d79a" stroke-width="2"/></svg>
        </div>
        <div class="st st-right">
          <div class="griploc"><i class="grip"></i><svg width="8" height="8"><use href="#collapse"/></svg></div>
          <svg class="pv pv-1" width="16" height="21" viewBox="0 0 20 24"><use href="#doc"/></svg>
          <div class="pv-act"><svg width="16" height="24" viewBox="0 0 16 24"><rect x=".5" y=".5" width="15" height="8" fill="#fff" stroke="#555"/><path d="M.5 11.500h11l4 4v8H.5z" fill="#fff" stroke="#555"/><path d="M11 11l5 5h-5z" fill="#555"/></svg></div>
          <svg class="pv pv-2" width="24" height="16" viewBox="0 0 24 16"><path d="M.5.500h7l3 3v12H.5zM13.500.500h7l3 3v12h-10z" fill="none" stroke="#bbb"/></svg>
          <svg class="pv pv-4" width="24" height="22" viewBox="0 0 24 22"><path d="M.5.500h10v8H.5zM13.500.500h10v8h-10zM.5 12.500h7l3 3v6H.5zM13.500 12.500h7l3 3v6h-10z" fill="none" stroke="#bbb"/></svg>
          <div class="griploc g-zoom"><i class="grip"></i><svg width="8" height="8"><use href="#collapse"/></svg></div>
          <div class="combo c-stat"><span>1000%</span><svg class="chev"><use href="#chev"/></svg></div>
          <i class="vsep r-sep"></i>
          <svg class="zm" width="22" height="22"><use href="#circminus"/></svg>
          <div class="slider"><i class="sl-on"></i><i class="sl-tick"></i><i class="sl-knob"></i><i class="sl-off"></i></div>
          <svg class="zm zm-plus" width="22" height="22"><use href="#circplus"/></svg>
          <div class="griploc g-pdf"><i class="grip"></i><svg width="8" height="8"><use href="#collapse"/></svg></div>
          <svg class="pdf" width="22" height="22" viewBox="0 0 22 22"><rect width="22" height="22" rx="3" fill="#a40e10"/><path d="M4 17c3-2 6-8 6-12 0-2 2-2 2 0 0 4 3 8 6 9-4 0-9 1-14 3z" fill="none" stroke="#fff" stroke-width="1.300"/></svg>
          <svg class="chev pdf-chev"><use href="#chev"/></svg>
        </div>
      </footer>
    </div>

    <aside class="vscroll">
      <svg class="up" width="9" height="6" viewBox="0 0 9 6"><path d="M1 5l3.500-3.500L8 5" fill="none" stroke="#555" stroke-width="1.300"/></svg>
      <i class="vthumb"></i>
      <i class="tick t1"></i><i class="tick t2"></i><i class="tick t3"></i><i class="tick t4"></i><i class="tick t5"></i><i class="tick t6"></i>
      <svg class="down" width="9" height="9" viewBox="0 0 9 9"><path d="M1 1l3.500 3.500L8 1" fill="none" stroke="#333" stroke-width="1.300"/><path d="M0 8h9" stroke="#333"/></svg>
    </aside>
  </div>
</div>
</body>
</html>
```

FILE: styles.css
```css
* { box-sizing: border-box; }
html, body { margin: 0; padding: 0; height: 100%; overflow: hidden; }
body { font-family: "Noto Sans", "Open Sans", sans-serif; font-size: 11.3px; color: #1d1d1d; background: #d4d4d4; }
i { display: block; font-style: normal; }
svg { display: block; flex: none; }
.defs { position: absolute; width: 0; height: 0; }
.app { width: 1920px; height: 1032px; display: flex; flex-direction: column; overflow: hidden; }

/* header */
.head { height: 60px; flex: none; background: #d4d4d4; border-bottom: 1px solid #b2b2b2; display: grid; grid-template-columns: 758px 74px 727px 361px; grid-template-rows: 29px 30px; }
.qat { grid-column: 1; grid-row: 1; display: flex; align-items: center; }
.q { display: flex; align-items: center; justify-content: center; height: 29px; }
.q8 { width: 8px; } .q10 { width: 10px; } .q24 { width: 24px; } .q28 { width: 28px; } .q29 { width: 29px; } .q30 { width: 30px; } .q31 { width: 31px; } .q32 { width: 32px; }
.chev { width: 9px; height: 6px; }
.chev.dim, .dim { opacity: .45; }
.vsep { width: 1px; align-self: stretch; background: #a9a9a9; flex: none; }
.m-l2 { margin-left: 2px; } .m-x2 { margin: 0 0 0 2px; } .m-x1 { margin: 0 0 0 1px; } .m-l3 { margin-left: 3px; } .m-l4 { margin-left: 4px; } .m-l5 { margin-left: 5px; }

.tabs { grid-column: 1; grid-row: 2; display: flex; align-items: stretch; height: 30px; }
.tab-file { width: 54px; height: 28px; margin-top: 1px; background: #ab4a4a; color: #fff; border-radius: 3px 3px 0 0; display: flex; align-items: center; justify-content: center; }
.tab-home { width: 51px; margin-left: 4px; background: #f3f3f3; border: 1px solid #c4c4c4; border-bottom: 0; border-radius: 3px 3px 0 0; display: flex; align-items: center; justify-content: center; color: #23395b; position: relative; height: 31px; }
.tab-home::after { content: ""; position: absolute; left: 5px; right: 5px; bottom: 2px; height: 2px; background: #8aa5bd; }
.tab { padding: 0 9px; display: flex; align-items: center; }
.context { grid-column: 2; grid-row: 1 / 3; background: #d2cdb3; border-top: 2px solid #c9a93e; border-left: 1px solid #c9c39b; border-right: 1px solid #c9c39b; margin-top: 1px; display: flex; flex-direction: column; align-items: center; text-align: center; }
.ctx-title { line-height: 12px; padding-top: 2px; height: 29px; }
.ctx-tab { line-height: 30px; }
.title { grid-column: 3; grid-row: 1; text-align: center; line-height: 29px; }
.winbar { grid-column: 4; grid-row: 1; display: flex; align-items: center; }
.quick { width: 153px; height: 21px; background: #fff; border: 1px solid #b9b9b9; border-radius: 2px; display: flex; align-items: center; gap: 5px; padding-left: 3px; color: #8f8f8f; }
.wbtn { width: 44px; display: flex; justify-content: center; }
.wb-min { margin-left: 1px; }
.quickbtns { grid-column: 4; grid-row: 2; display: flex; align-items: center; padding-left: 195px; }
.qbtn { height: 28px; display: flex; align-items: center; gap: 3px; padding: 0 3px; width: 63px; border: 1px solid transparent; border-radius: 2px; }
.qbtn + .qbtn { width: 71px; margin-left: 3px; padding-left: 0; }
.qbtn.active { background: #e4d2a2; border-color: #cfc49f; }
.caret { margin-left: 17px; }

/* ribbon */
.ribbon { height: 103px; flex: none; background: #f3f3f3; border-bottom: 1px solid #3b3b3b; display: flex; }
.group { display: flex; flex-direction: column; border-right: 1px solid #cfcfcf; flex: none; }
.g-tools { width: 268px; } .g-view { width: 177px; } .g-objects { width: 217px; } .g-comment { width: 269px; } .g-links { width: 209px; } .g-protect { width: 66px; }
.ribbon-rest { flex: 1; }
.gbody { flex: none; height: 87px; display: flex; padding-top: 2px; }
.glabel { text-align: center; color: #8c8c8c; line-height: 14px; }
.big { flex: none; display: flex; flex-direction: column; align-items: center; text-align: center; }
.bic { height: 55px; display: flex; align-items: center; justify-content: center; }
.lbl { line-height: 13px; white-space: nowrap; }
.lbl .chev { display: block; margin: 3px auto 0; }
.lbl .chev.inl { display: inline-block; margin: 0 0 0 2px; vertical-align: 0; }
.w49 { width: 49px; } .w52 { width: 52px; } .w54 { width: 54px; } .w56 { width: 56px; } .w64 { width: 64px; } .w65 { width: 65px; }
.smallcol { display: flex; flex-direction: column; }
.srow { height: 28px; display: flex; align-items: center; white-space: nowrap; padding-left: 3px; }
.srow span { padding-bottom: 2px; }
.sic { margin-right: 3px; }
.sic22 { margin-right: 4px; }
.col-a { width: 112px; } .col-a .srow { padding-left: 5px; }
.col-b { width: 99px; }
.col-l .srow { padding-left: 0; }
.corner { width: 0; height: 0; border-left: 4px solid transparent; border-bottom: 4px solid #333; align-self: flex-end; margin: 0 0 7px 3px; }
.stampsep { margin: 0 2px 0 0; height: 84px; background: #cfcfcf; }
.stamp { width: 51px; height: 84px; background: #e4d2a2; border: 1px solid #cfc49f; border-radius: 2px; display: flex; flex-direction: column; align-items: center; text-align: center; gap: 4px; padding-top: 2px; }
.ictxt { font: bold 28px "Liberation Serif", serif; fill: #555; }
.ictxt.lg { font-size: 30px; }
.ictxt.add { font-size: 24px; }
.ictxt.sm { font-size: 20px; fill: #444; }
.mini { font: 8px "Liberation Sans", sans-serif; fill: #3f9be8; }
.mini2 { font: bold 9px "Liberation Serif", serif; fill: #444; }
.mini3 { font: bold 12px "Liberation Serif", serif; fill: #444; }
.c-gray { color: #8a8a8a; } .c-blue { color: #4da3ee; } .c-orange { color: #f9a825; }

.viewgrid { flex: none; height: 87px; padding-top: 2px; display: flex; flex-direction: column; }
.vrow { height: 28px; display: flex; align-items: center; padding-left: 2px; }
.vrow1 { padding-left: 5px; gap: 5px; }
.cell { width: 28px; height: 28px; display: flex; align-items: center; justify-content: center; position: relative; }
.rsep { margin: 0 1px 0 0; height: 26px; align-self: center; background: #c8c8c8; }
.rsep2 { margin: 0 1px 0 0; height: 26px; align-self: center; background: #c8c8c8; }
.cell-dot { position: relative; }
.gdot { position: absolute; width: 4px; height: 4px; border-radius: 50%; background: #5d9e2f; right: 4px; bottom: 0; }
.gdot-s { right: 1px; bottom: 1px; }
.combo { height: 22px; background: #fff; border: 1px solid #b8b8b8; border-radius: 3px; display: flex; align-items: center; justify-content: space-between; padding: 0 4px; color: #222; }
.combo span { padding-bottom: 2px; }
.c-zoom { width: 111px; }

/* document tab strip */
.docstrip { height: 31px; flex: none; display: flex; background: repeating-conic-gradient(#7b7b7b 0 25%, #858585 0 50%) 0 0 / 3px 3px; }
.doctab { width: 173px; background: #f3f3f3; border-radius: 3px 3px 0 0; padding-left: 5px; position: relative; display: flex; align-items: center; color: #1f2c45; }
.doctab::after { content: ""; position: absolute; left: 5px; right: 5px; bottom: 1px; height: 2px; background: #a9a9a9; }
.doctab-x { position: absolute; right: 6px; top: 6px; }
.addtab { width: 27px; height: 27px; margin: 3px 0 0 2px; background: #c8c8c8; border-radius: 2px; display: flex; align-items: center; justify-content: center; }
.strip-rest { flex: 1; }
.closeall { width: 30px; height: 29px; margin-top: 1px; background: #c4c4c4; border-radius: 2px; display: flex; align-items: center; justify-content: center; }
.stripgap { height: 3px; flex: none; background: #f5f5f5; }

/* work area */
.work { flex: 1; min-height: 0; display: grid; grid-template-columns: 31px 1fr 15px; background: #f3f3f3; }
.side { background: #f3f3f3; display: flex; flex-direction: column; align-items: center; }
.side-top { width: 100%; height: 10px; background: #e9e9e9; display: flex; justify-content: flex-end; align-items: center; padding-right: 1px; }
.grip-h { width: 25px; height: 9px; margin-top: 3px; background: repeating-conic-gradient(#c6c6c6 0 25%, transparent 0 50%) 0 0 / 2px 2px; }
.sideicons { display: flex; flex-direction: column; }
.sideicons:first-of-type { margin-top: 1px; }
.si { height: 28px; width: 28px; display: flex; align-items: center; justify-content: center; position: relative; margin-left: -2px; }
.side-sep { width: 28px; height: 1px; background: #bdbdbd; margin: 1px 0; }
.center { display: flex; flex-direction: column; min-width: 0; }
.viewport { flex: 1; min-height: 0; position: relative; background: #fff; border: 1px solid #6e6e6e; border-width: 1px 1px 2px 1px; overflow: hidden; }
.viewport::after { content: ""; position: absolute; inset: 0; box-shadow: inset 2px 3px 2px -1px rgba(0,0,0,.18), inset -2px 0 2px -1px rgba(0,0,0,.15); pointer-events: none; }
.drawing { width: 1872px; height: 786px; }
.ink { fill: #000; }
.stroke14 { fill: none; stroke: #000; stroke-width: 14.500; }
.stroke14 .wave { stroke-width: 15; }
.hl { fill: #83ebff; stroke: #0aa3e0; stroke-width: 1.500; }
.tag { font: 129.500px "Liberation Sans", Arial, sans-serif; fill: #000; }
.tag-digits { font-family: Roboto, "Liberation Sans", sans-serif; font-size: 130px; letter-spacing: -1.500px; stroke: #000; stroke-width: 1.500px; }
.check { fill: rgb(60,177,108); opacity: .46; }

.findbar { position: absolute; left: 1562px; top: 1px; width: 309px; height: 33px; z-index: 2; background: #f3f3f3; border: 1px solid #d8d8d8; border-radius: 4px; box-shadow: 0 1px 3px rgba(0,0,0,.3); display: flex; align-items: center; padding-left: 9px; }
.findbox { width: 191px; height: 23px; margin-left: 6px; background: #fff; border: 1px solid #b8b8b8; border-radius: 2px; display: flex; align-items: center; padding: 0 4px 0 3px; }
.findbox span { padding-bottom: 2px; }
.ftext { color: #1b1b3f; flex: 1; }
.fcount { color: #7a5b96; margin-right: 3px; }
.findbox .chev { margin-left: 8px; }
.fic-prev { margin-left: 8px; }
.fic-next { margin-left: 15px; }
.fic-more { margin-left: 18px; }
.fic-close { margin-left: 14px; }

.hscroll { height: 16px; flex: none; background: #efefef; display: flex; align-items: center; padding: 0 4px; position: relative; }
.hthumb { position: absolute; left: 384px; top: 4px; width: 109px; height: 5px; border-radius: 3px; background: #808080; }
.arrow + .hthumb + .arrow { margin-left: auto; }

.status { height: 31px; flex: none; background: #f3f3f3; display: grid; grid-template-columns: 799px 642px 1fr; }
.st { display: flex; align-items: center; position: relative; padding-bottom: 1px; }
.griploc { width: 10px; display: flex; flex-direction: column; align-items: center; gap: 2px; flex: none; align-self: flex-end; }
.st-left .griploc { margin-left: 1px; }
.grip { width: 10px; height: 14px; background: repeating-conic-gradient(#c6c6c6 0 25%, transparent 0 50%) 0 0 / 2px 2px; }
.st-gear { margin-left: 2px; }
.st-opt { margin-left: 4px; padding-bottom: 1px; }
.st-chev { margin-left: 5px; }
.st-sep { margin: 2px 0 2px 2px; }
.st-ic { margin-left: 3px; }
.st-vals { display: flex; flex-direction: column; line-height: 13px; white-space: nowrap; margin-left: 1px; padding-bottom: 1px; word-spacing: -1px; }
.v-wh { width: 76px; }
.st-sep2 { margin: 2px 0 2px 1px; }
.st-ic2 { margin-left: 4px; }
.v-xy { margin-left: 1px; }
.nav { margin-left: 6px; }
.nav0 { margin-left: 3px; }
.nav-f { margin-left: 6px; }
.pagebox { width: 95px; height: 22px; margin-left: 4px; background: #f8f8f8; border: 1px solid #c4c4c4; border-radius: 2px; display: flex; align-items: center; justify-content: flex-end; gap: 2px; padding-right: 3px; color: #555; }
.slash { font-size: 16px; font-weight: 300; line-height: 1; }
.pg-total { align-self: flex-start; padding-top: 1px; }
.pagebox + .nav { margin-left: 5px; }
.mid-sep { margin: 0 0 0 4px; }
.mid-sep + .nav { margin-left: 7px; }
.pv-1 { margin-left: 6px; }
.pv-act { width: 28px; height: 28px; margin-left: 6px; background: #e4d2a2; border: 1px solid #cfc49f; border-radius: 2px; display: flex; align-items: center; justify-content: center; }
.pv-2 { margin-left: 2px; }
.pv-4 { margin-left: 4px; }
.g-zoom { margin-left: 5px; }
.c-stat { width: 81px; margin-left: 1px; }
.r-sep { margin: 0 0 0 3px; }
.zm { margin-left: 4px; }
.slider { width: 100px; height: 22px; margin-left: 5px; position: relative; flex: none; }
.zm-plus { margin-left: 5px; }
.sl-on { position: absolute; left: 0; top: 10px; width: 63px; height: 3px; background: #9a9a9a; }
.sl-off { position: absolute; left: 80px; top: 10px; width: 20px; height: 3px; background: #c8c8c8; }
.sl-tick { position: absolute; left: 49px; top: 5px; height: 13px; width: 1px; border-left: 1px dashed #666; }
.sl-knob { position: absolute; left: 62px; top: 2px; width: 19px; height: 19px; border-radius: 50%; background: #888; border: 1px solid #666; box-shadow: inset 0 0 0 4px #f4f4f4; }
.g-pdf { margin-left: 6px; }
.pdf { margin-left: 3px; }
.pdf-chev { margin-left: 5px; }

.vscroll { background: #efefef; position: relative; }
.up { position: absolute; left: 3px; top: 6px; }
.down { position: absolute; left: 4px; top: 803px; }
.vthumb { position: absolute; left: 10px; top: 197px; width: 6px; height: 27px; border-radius: 3px; background: #8c8c8c; }
.tick { position: absolute; left: 1px; width: 8px; height: 1px; background: #1e8fff; }
.t1 { top: 209px; } .t2 { top: 269px; } .t3 { top: 371px; } .t4 { top: 428px; } .t5 { top: 532px; } .t6 { top: 582px; }
```
